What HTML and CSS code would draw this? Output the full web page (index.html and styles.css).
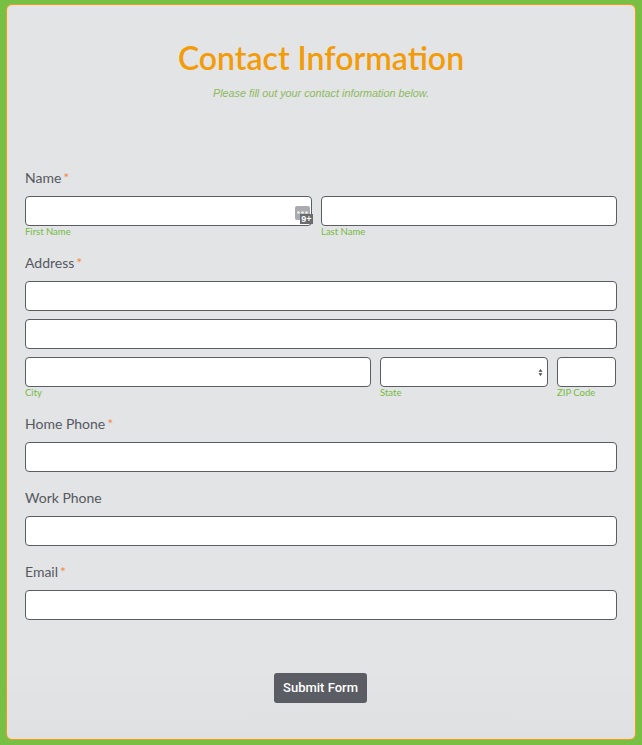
FILE: index.html
```html
<!DOCTYPE html>
<html lang="en">
<head>
    <meta charset="UTF-8">
    <meta name="viewport" content="width=device-width, initial-scale=1.0">
    <title>Contact Information</title>
    <link rel="stylesheet" href="styles.css">
</head>
<body>

    <form class="card">
        <div class="form-header">
            <h1>Contact Information</h1>
            <p>Please fill out your contact information below.</p>
        </div>

        <!-- Name -->
        <div class="field field-first">
            <label>Name<span class="req">*</span></label>
            <div class="row">
                <div class="col col-half">
                    <div class="input-wrap">
                        <input type="text">
                        <div class="pw-icon">
                            <svg width="15" height="14" viewBox="0 0 15 14">
                                <rect width="15" height="14" rx="2" fill="#a9abae"/>
                                <circle cx="3.5" cy="6.5" r="1.3" fill="#efefef"/>
                                <circle cx="7.5" cy="6.5" r="1.3" fill="#efefef"/>
                                <circle cx="11.5" cy="6.5" r="1.3" fill="#efefef"/>
                            </svg>
                            <span class="pw-badge">9+</span>
                        </div>
                    </div>
                    <small>First Name</small>
                </div>
                <div class="col col-half-right">
                    <input type="text">
                    <small>Last Name</small>
                </div>
            </div>
        </div>

        <!-- Address -->
        <div class="field">
            <label>Address<span class="req">*</span></label>
            <input class="stacked" type="text">
            <input class="stacked" type="text">
            <div class="row">
                <div class="col col-city">
                    <input type="text">
                    <small>City</small>
                </div>
                <div class="col col-state">
                    <div class="input-wrap">
                        <select></select>
                        <svg class="select-arrow" width="5" height="7" viewBox="0 0 5 7">
                            <path d="M2.5 0 L4.5 2.7 L0.5 2.7 Z M2.5 7 L4.5 4.3 L0.5 4.3 Z" fill="#4a4a4a"/>
                        </svg>
                    </div>
                    <small>State</small>
                </div>
                <div class="col col-zip">
                    <input type="text">
                    <small>ZIP Code</small>
                </div>
            </div>
        </div>

        <div class="field">
            <label>Home Phone<span class="req">*</span></label>
            <input type="text">
        </div>

        <div class="field">
            <label>Work Phone</label>
            <input type="text">
        </div>

        <div class="field">
            <label>Email<span class="req">*</span></label>
            <input type="text">
        </div>

        <div class="form-footer">
            <button type="button">Submit Form</button>
        </div>
    </form>

</body>
</html>
```

FILE: styles.css
```css
/* Global Styles */
* {
    box-sizing: border-box;
}

html, body {
    height: 100%;
}

body {
    margin: 0;
    padding: 4px 6px 5px 6px;
    background-color: #78c043;
    font-family: 'Lato', sans-serif;
    overflow: hidden;
}

.card {
    height: 736px;
    padding: 0 18px;
    background: linear-gradient(to bottom, #e3e4e6 90%, #dfe0e2 100%);
    border: 1px solid #f39c12;
    border-radius: 6px;
}

/* Header */
.form-header {
    padding-top: 35px;
    text-align: center;
}

h1 {
    margin: 0;
    font-size: 32px;
    line-height: 36px;
    font-weight: 600;
    color: #f39c0a;
}

.form-header p {
    margin: 11px 0 0;
    font-family: 'Liberation Sans', Arial, sans-serif;
    font-size: 10.8px;
    line-height: 13px;
    font-style: italic;
    color: #8dba5c;
}

/* Fields */
.field {
    margin-top: 17px;
}

.field-first {
    margin-top: 69px;
}

label {
    display: block;
    height: 18px;
    margin-bottom: 9px;
    font-size: 14px;
    line-height: 18px;
    color: #55595f;
}

.req {
    margin-left: 2px;
    color: #f58a4b;
}

input, select {
    display: block;
    width: 100%;
    height: 30px;
    padding: 0 8px;
    background-color: #fff;
    border: 1px solid #5a5d63;
    border-radius: 4px;
    outline: none;
    appearance: none;
}

.stacked {
    margin-bottom: 8px;
}

.row {
    display: flex;
    gap: 9px;
}

.col-half {
    width: 287px;
}

.col-half-right {
    width: 296px;
}

.col-city {
    width: 346px;
}

.col-state {
    width: 168px;
}

.col-zip {
    width: 59px;
}

small {
    display: block;
    height: 11px;
    font-size: 9.5px;
    line-height: 11px;
    color: #74bb40;
}

.input-wrap {
    position: relative;
}

/* Password manager icon */
.pw-icon {
    position: absolute;
    top: 8px;
    right: 2px;
    width: 15px;
    height: 14px;
}

.pw-badge {
    position: absolute;
    top: 10px;
    left: 5px;
    width: 13px;
    height: 10px;
    background-color: #6a6c70;
    color: #fff;
    font-family: 'Liberation Sans', Arial, sans-serif;
    font-size: 9px;
    font-weight: bold;
    line-height: 10px;
    text-align: center;
}

.select-arrow {
    position: absolute;
    top: 12px;
    right: 5px;
}

/* Submit */
.form-footer {
    margin-top: 53px;
    padding-right: 1px;
    text-align: center;
}

button {
    width: 93px;
    height: 30px;
    padding: 0 0 2px;
    background-color: #5a5d63;
    border: none;
    border-radius: 3px;
    color: #fff;
    font-family: 'Roboto', sans-serif;
    font-size: 13px;
    font-weight: 500;
    cursor: pointer;
}
```
